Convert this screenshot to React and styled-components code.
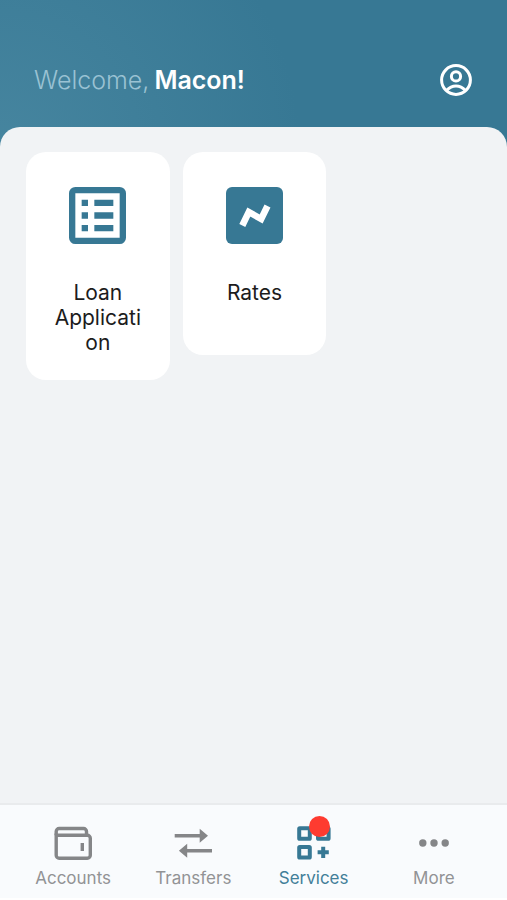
import { useState } from "react";
import styled, { createGlobalStyle } from "styled-components";

const GlobalStyle = createGlobalStyle`
  * {
    box-sizing: border-box;
  }

  body {
    margin: 0;
    background: #ffffff;
    font-family: Inter, "Liberation Sans", sans-serif;
  }
`;

const Screen = styled.div`
  display: flex;
  flex-direction: column;
  min-height: 100vh;
  padding-bottom: 2px;
`;

const Top = styled.div`
  flex: 1;
  display: flex;
  flex-direction: column;
  background: radial-gradient(circle at 0 150px, #46859f 0, #377894 300px);
`;

const Header = styled.header`
  display: flex;
  align-items: center;
  justify-content: space-between;
  padding: 60px 35px 27px 34px;
`;

const Greeting = styled.h1`
  display: flex;
  gap: 5px;
  margin: 0;
  font-size: 25px;
  line-height: 40px;
  font-weight: 300;
  color: #9ac2d3;
`;

const UserName = styled.strong`
  font-weight: 600;
  color: #ffffff;
`;

const IconButton = styled.button`
  display: flex;
  padding: 0;
  border: 0;
  background: none;
  color: #ffffff;
  cursor: pointer;
`;

const Content = styled.main`
  flex: 1;
  padding: 25px 24px 25px 26px;
  border-radius: 20px 20px 0 0;
  background: #f1f3f5;
`;

const ServiceGrid = styled.div`
  display: grid;
  grid-template-columns: repeat(3, 1fr);
  gap: 13px;
  align-items: start;
`;

const ServiceCard = styled.button`
  display: flex;
  flex-direction: column;
  align-items: center;
  gap: 36px;
  padding: 35px 28px 25px;
  border: 0;
  border-radius: 20px;
  background: #ffffff;
  color: #377894;
  font: inherit;
  cursor: pointer;
`;

const ServiceName = styled.span`
  width: 100%;
  min-height: 50px;
  font-size: 21px;
  line-height: 25px;
  text-align: center;
  overflow-wrap: anywhere;
  color: #1c1c1c;
`;

const TabBar = styled.nav`
  display: grid;
  grid-template-columns: repeat(4, 1fr);
  padding: 21px 13px 8px;
  border-top: 2px solid #e9ebed;
  background: #f9fbfd;
`;

const Tab = styled.a`
  display: flex;
  flex-direction: column;
  align-items: center;
  gap: 6px;
  font-size: 17px;
  line-height: 24px;
  text-decoration: none;
  color: ${({ $active }) => ($active ? "#437f99" : "#929395")};
`;

const TabIcon = styled.span`
  position: relative;
  display: flex;
  align-items: center;
  justify-content: center;
  height: 34px;
  color: ${({ $active }) => ($active ? "#377894" : "#858688")};
`;

const Badge = styled.span`
  position: absolute;
  top: -10px;
  right: 1px;
  width: 21px;
  height: 21px;
  border-radius: 50%;
  background: #fe3b30;
`;

const ProfileIcon = () => (
  <svg width="32" height="32" viewBox="0 0 32 32" fill="none" stroke="currentColor" strokeWidth="3">
    <circle cx="16" cy="16" r="14.4" />
    <circle cx="16" cy="12.4" r="4.6" />
    <path d="M6.8 26.3C9.5 23.2 12.3 22 16 22s6.5 1.200 9.2 4.3" />
  </svg>
);

const LoanIcon = () => (
  <svg width="57" height="57" viewBox="0 0 18 18" fill="currentColor">
    <path
      fillRule="evenodd"
      d="M2 0h14a2 2 0 0 1 2 2v14a2 2 0 0 1-2 2H2a2 2 0 0 1-2-2V2a2 2 0 0 1 2-2zM2 2v14h14V2z"
    />
    <path d="M4 4h2v2H4zM8 4h6v2H8zM4 8h2v2H4zM8 8h6v2H8zM4 12h2v2H4zM8 12h6v2H8z" />
  </svg>
);

const RatesIcon = () => (
  <svg width="57" height="57" viewBox="0 0 57 57">
    <rect width="57" height="57" rx="6" fill="currentColor" />
    <path d="M16.3 38.5L22.8 25L35.2 32L41.5 19" fill="none" stroke="#ffffff" strokeWidth="6.6" />
  </svg>
);

const AccountsIcon = () => (
  <svg width="38" height="34" viewBox="0 0 38 34" fill="none" stroke="currentColor" strokeWidth="3.4">
    <path d="M2.2 9.3V5.5a3 3 0 0 1 3-3H29.5a3 3 0 0 1 3 3V9.3" />
    <path d="M2.2 9.3H33.3a3 3 0 0 1 3 3V29.3a3 3 0 0 1-3 3H5.2a3 3 0 0 1-3-3z" />
    <path d="M28.3 17v8" />
  </svg>
);

const TransfersIcon = () => (
  <svg width="38" height="30" viewBox="0 0 38 30" fill="currentColor">
    <path d="M0.7 6h25V.7l8.3 7-8.3 7V9.4h-25z" />
    <path d="M38 21H13.200v-5.3l-8.3 7 8.3 7v-5.3H38z" />
  </svg>
);

const ServicesIcon = () => (
  <svg width="34" height="34" viewBox="0 0 34 34" fill="none" stroke="currentColor" strokeWidth="4">
    <rect x="2.2" y="2.2" width="10.6" height="10.6" rx="0.6" />
    <rect x="21" y="2.2" width="10.6" height="10.6" rx="0.6" />
    <rect x="2.2" y="21" width="10.6" height="10.6" rx="0.6" />
    <path d="M26.2 20.7v11.2M20.6 26.3h11.2" />
  </svg>
);

const MoreIcon = () => (
  <svg width="30" height="8" viewBox="0 0 30 8" fill="currentColor">
    <circle cx="3.8" cy="4" r="3.7" />
    <circle cx="15" cy="4" r="3.7" />
    <circle cx="26.2" cy="4" r="3.7" />
  </svg>
);

const services = [
  { name: "Loan Application", Icon: LoanIcon },
  { name: "Rates", Icon: RatesIcon },
];

const tabs = [
  { name: "Accounts", Icon: AccountsIcon },
  { name: "Transfers", Icon: TransfersIcon },
  { name: "Services", Icon: ServicesIcon, badge: true },
  { name: "More", Icon: MoreIcon },
];

const App = () => {
  const [activeTab, setActiveTab] = useState("Services");

  return (
    <Screen>
      <GlobalStyle />
      <Top>
        <Header>
          <Greeting>
            Welcome, <UserName>Macon!</UserName>
          </Greeting>
          <IconButton type="button" aria-label="Profile">
            <ProfileIcon />
          </IconButton>
        </Header>
        <Content>
          <ServiceGrid>
            {services.map(({ name, Icon }) => (
              <ServiceCard key={name} type="button">
                <Icon />
                <ServiceName>{name}</ServiceName>
              </ServiceCard>
            ))}
          </ServiceGrid>
        </Content>
      </Top>
      <TabBar>
        {tabs.map(({ name, Icon, badge }) => (
          <Tab
            key={name}
            href={`#${name.toLowerCase()}`}
            $active={name === activeTab}
            onClick={() => setActiveTab(name)}
          >
            <TabIcon $active={name === activeTab}>
              <Icon />
              {badge && <Badge />}
            </TabIcon>
            {name}
          </Tab>
        ))}
      </TabBar>
    </Screen>
  );
};

export default App;
